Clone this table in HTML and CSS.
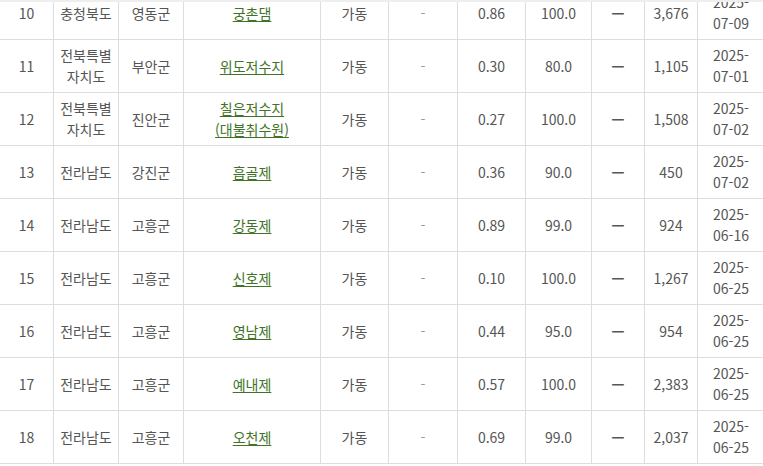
FILE: index.html
```html
<!DOCTYPE html>
<html lang="ko">
<head>
<meta charset="utf-8">
<title>저수지 현황</title>
<link rel="stylesheet" href="styles.css">
</head>
<body>
<div class="viewport">
  <div class="top-edge"></div>
  <table class="grid">
    <colgroup>
      <col class="c-no"><col class="c-sido"><col class="c-sgg"><col class="c-name"><col class="c-state"><col class="c-dash"><col class="c-val"><col class="c-rate"><col class="c-em"><col class="c-cnt"><col class="c-date">
    </colgroup>
    <tbody>
      <tr><td>10</td><td>충청북도</td><td>영동군</td><td><a href="#">궁촌댐</a></td><td>가동</td><td class="dash">-</td><td>0.86</td><td>100.0</td><td class="em">ㅡ</td><td>3,676</td><td>2025-<br>07-09</td></tr>
      <tr><td>11</td><td>전북특별<br>자치도</td><td>부안군</td><td><a href="#">위도저수지</a></td><td>가동</td><td class="dash">-</td><td>0.30</td><td>80.0</td><td class="em">ㅡ</td><td>1,105</td><td>2025-<br>07-01</td></tr>
      <tr><td>12</td><td>전북특별<br>자치도</td><td>진안군</td><td><a href="#">칠은저수지<br>(대불취수원)</a></td><td>가동</td><td class="dash">-</td><td>0.27</td><td>100.0</td><td class="em">ㅡ</td><td>1,508</td><td>2025-<br>07-02</td></tr>
      <tr><td>13</td><td>전라남도</td><td>강진군</td><td><a href="#">흡골제</a></td><td>가동</td><td class="dash">-</td><td>0.36</td><td>90.0</td><td class="em">ㅡ</td><td>450</td><td>2025-<br>07-02</td></tr>
      <tr><td>14</td><td>전라남도</td><td>고흥군</td><td><a href="#">강동제</a></td><td>가동</td><td class="dash">-</td><td>0.89</td><td>99.0</td><td class="em">ㅡ</td><td>924</td><td>2025-<br>06-16</td></tr>
      <tr><td>15</td><td>전라남도</td><td>고흥군</td><td><a href="#">신호제</a></td><td>가동</td><td class="dash">-</td><td>0.10</td><td>100.0</td><td class="em">ㅡ</td><td>1,267</td><td>2025-<br>06-25</td></tr>
      <tr><td>16</td><td>전라남도</td><td>고흥군</td><td><a href="#">영남제</a></td><td>가동</td><td class="dash">-</td><td>0.44</td><td>95.0</td><td class="em">ㅡ</td><td>954</td><td>2025-<br>06-25</td></tr>
      <tr><td>17</td><td>전라남도</td><td>고흥군</td><td><a href="#">예내제</a></td><td>가동</td><td class="dash">-</td><td>0.57</td><td>100.0</td><td class="em">ㅡ</td><td>2,383</td><td>2025-<br>06-25</td></tr>
      <tr><td>18</td><td>전라남도</td><td>고흥군</td><td><a href="#">오천제</a></td><td>가동</td><td class="dash">-</td><td>0.69</td><td>99.0</td><td class="em">ㅡ</td><td>2,037</td><td>2025-<br>06-25</td></tr>
    </tbody>
  </table>
</div>
</body>
</html>
```
FILE: styles.css
```css
html, body {
  margin: 0;
  padding: 0;
  background: #fff;
}
.viewport {
  position: relative;
  width: 763px;
  height: 466px;
  overflow: hidden;
}
.top-edge {
  position: absolute;
  top: 0;
  left: 0;
  right: 0;
  height: 2px;
  background: #eeeeee;
  z-index: 2;
}
.grid {
  border-collapse: collapse;
  table-layout: fixed;
  width: 765px;
  margin-top: -14px;
  margin-left: -1px;
  font-family: "Noto Sans CJK KR", "Noto Sans", sans-serif;
  font-size: 14px;
  line-height: 21px;
  color: #555555;
}
.grid td {
  border: 1px solid #dddddd;
  padding: 5px 3px;
  height: 42px;
  text-align: center;
  vertical-align: middle;
}
.c-no { width: 54px; }
.c-sido { width: 65px; }
.c-sgg { width: 65px; }
.c-name { width: 137px; }
.c-state { width: 68px; }
.c-dash { width: 69px; }
.c-val { width: 68px; }
.c-rate { width: 66px; }
.c-em { width: 53px; }
.c-cnt { width: 53px; }
.c-date { width: 67px; }
.grid a {
  color: #3f7326;
  text-decoration: underline;
  text-underline-offset: 2px;
}
.grid .dash {
  color: #999999;
}
.grid .em {
  color: #5a5550;
  font-weight: 700;
}
```
